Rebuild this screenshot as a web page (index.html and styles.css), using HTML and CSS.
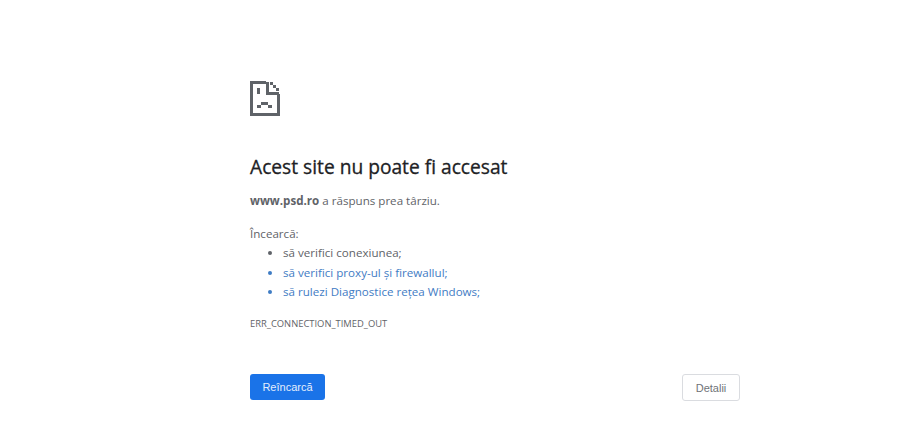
FILE: index.html
```html
<!DOCTYPE html>
<html lang="ro">
<head>
  <meta charset="UTF-8" />
  <title>Acest site nu poate fi accesat</title>
  <link rel="stylesheet" href="styles.css">
</head>
<body>
  <div class="error-page">
    <svg class="sad-file" width="30" height="35" viewBox="0 0 30 35">
      <path d="M16 1.500H1.500V33.500H28.500V13" fill="none" stroke="#5f6368" stroke-width="3"/>
      <path d="M17.500 1V12.500H29" fill="none" stroke="#5f6368" stroke-width="3"/>
      <path d="M20 1h3v3h3v3h3v3h-3V7h-3V4h-3z" fill="#5f6368"/>
      <path d="M7 7h3v6H7zM11 21h7v3H11zM7 24h4v3H7zM18 24h4v3h-4z" fill="#5f6368"/>
    </svg>
    <h1>Acest site nu poate fi accesat</h1>
    <p class="summary"><strong>www.psd.ro</strong> a răspuns prea târziu.</p>
    <p class="try">Încearcă:</p>
    <ul>
      <li>să verifici conexiunea;</li>
      <li class="link">să verifici proxy-ul și firewallul;</li>
      <li class="link">să rulezi Diagnostice rețea Windows;</li>
    </ul>
    <div class="code">ERR_CONNECTION_TIMED_OUT</div>
    <div class="buttons">
      <button class="btn reload">Reîncarcă</button>
      <button class="btn details">Detalii</button>
    </div>
  </div>
</body>
</html>
```
FILE: styles.css
```css
body {
  margin: 0;
  background: #fff;
  color: #5f6368;
  font-family: "Open Sans", "Noto Sans", sans-serif;
  font-size: 11.6px;
}

.error-page {
  width: 490px;
  margin-left: 250px;
  padding-top: 81px;
}

.sad-file {
  display: block;
}

h1 {
  margin: 39px 0 0;
  color: #202124;
  font-size: 19.2px;
  font-weight: 500;
  line-height: 24px;
  -webkit-text-stroke: 0.3px #202124;
}

.summary {
  margin: 12px 0 0;
  line-height: 20px;
}

.summary strong {
  font-weight: 700;
}

.try {
  margin: 13px 0 0;
  line-height: 20px;
}

ul {
  margin: -1px 0 0;
  padding-left: 33px;
}

li {
  line-height: 19.5px;
}

li.link {
  color: #3f7cc4;
}

.code {
  margin-top: 15.5px;
  font-size: 9.4px;
  line-height: 14px;
}

.buttons {
  display: flex;
  justify-content: space-between;
  align-items: flex-start;
  margin-top: 43px;
}

.btn {
  font-family: "Liberation Sans", sans-serif;
  font-size: 11px;
  border-radius: 3px;
}

.reload {
  width: 75px;
  height: 26px;
  border: none;
  background: #1a73e8;
  color: #e4eefc;
}

.details {
  width: 58px;
  height: 27px;
  border: 1px solid #dadce0;
  background: #fff;
  color: #6f7377;
}
```
